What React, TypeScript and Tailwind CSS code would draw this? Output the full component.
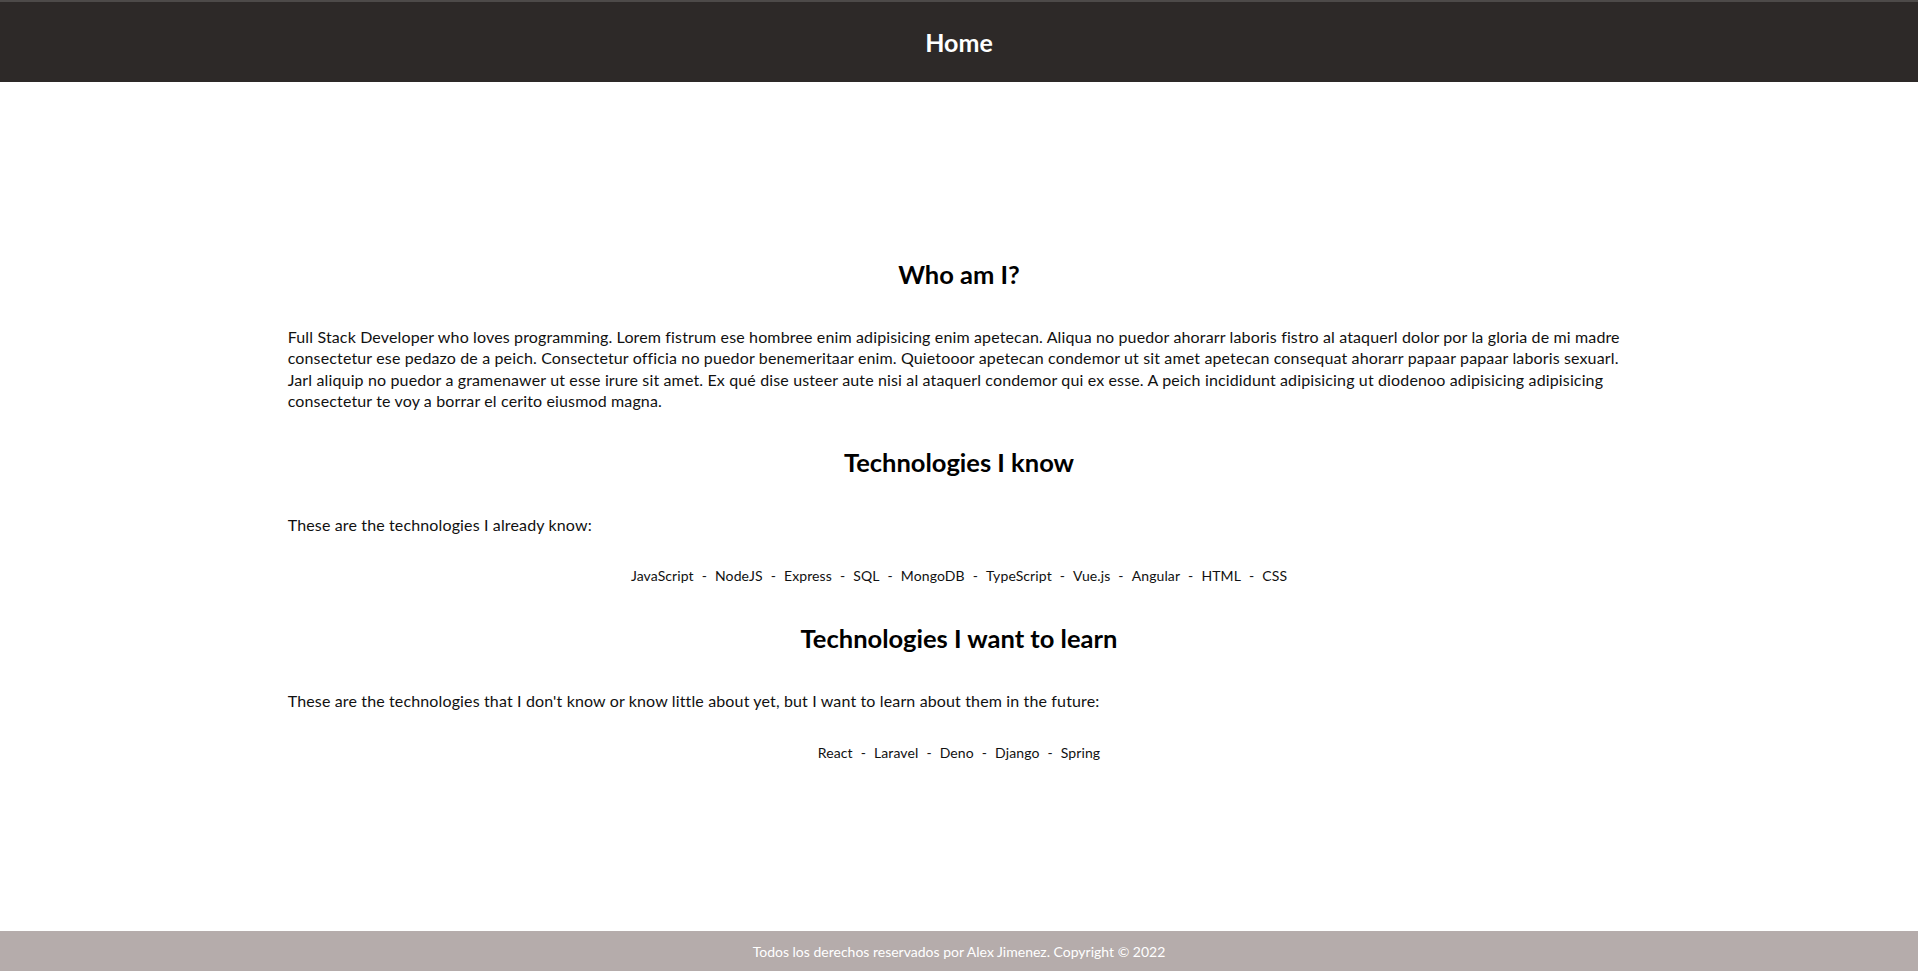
import React from 'react';

const known = ['JavaScript', 'NodeJS', 'Express', 'SQL', 'MongoDB', 'TypeScript', 'Vue.js', 'Angular', 'HTML', 'CSS'];
const wanted = ['React', 'Laravel', 'Deno', 'Django', 'Spring'];

function TechList({ items }: { items: string[] }) {
  return (
    <p className="text-center text-[14px] leading-[19px] tracking-[0.1px] text-[#111]">
      {items.map((t, i) => (
        <span key={t}>
          {t}
          {i < items.length - 1 && <span className="mx-[8px]">-</span>}
        </span>
      ))}
    </p>
  );
}

export default function App() {
  return (
    <div className="flex min-h-screen w-[1918px] flex-col bg-white font-['Lato','Liberation_Sans',sans-serif] text-black">
      <header className="flex h-[82px] items-center justify-center border-t-2 border-[#4d4a49] bg-[#2d2928]">
        <h1 className="text-[25px] font-bold leading-none text-white">Home</h1>
      </header>

      <main className="mx-auto w-[70%] flex-1 pt-[176px]">
        <h2 className="text-center text-[25.5px] font-bold leading-[33px]">Who am I?</h2>
        <p className="mt-[35px] text-[16px] leading-[21.3px] tracking-[0.14px] text-[#111]">
          Full Stack Developer who loves programming. Lorem fistrum ese hombree enim adipisicing enim apetecan. Aliqua no puedor
          ahorarr laboris fistro al ataquerl dolor por la gloria de mi madre consectetur ese pedazo de a peich. Consectetur officia
          no puedor benemeritaar enim. Quietooor apetecan condemor ut sit amet apetecan consequat ahorarr papaar papaar laboris
          sexuarl. Jarl aliquip no puedor a gramenawer ut esse irure sit amet. Ex qué dise usteer aute nisi al ataquerl condemor qui
          ex esse. A peich incididunt adipisicing ut diodenoo adipisicing adipisicing consectetur te voy a borrar el cerito eiusmod
          magna.
        </p>

        <h2 className="mt-[35px] text-center text-[25.5px] font-bold leading-[33px]">Technologies I know</h2>
        <p className="mt-[35px] text-[16px] leading-[21.3px] tracking-[0.14px] text-[#111]">These are the technologies I already know:</p>
        <div className="mt-[31px]">
          <TechList items={known} />
        </div>

        <h2 className="mt-[37px] text-center text-[25.5px] font-bold leading-[33px]">Technologies I want to learn</h2>
        <p className="mt-[35px] text-[16px] leading-[21.3px] tracking-[0.14px] text-[#111]">
          These are the technologies that I don't know or know little about yet, but I want to learn about them in the future:
        </p>
        <div className="mt-[31px]">
          <TechList items={wanted} />
        </div>
      </main>

      <footer className="flex h-[40px] items-center justify-center bg-[#b5acab]">
        <p className="text-[14px] text-white">Todos los derechos reservados por Alex Jimenez. Copyright © 2022</p>
      </footer>
    </div>
  );
}
